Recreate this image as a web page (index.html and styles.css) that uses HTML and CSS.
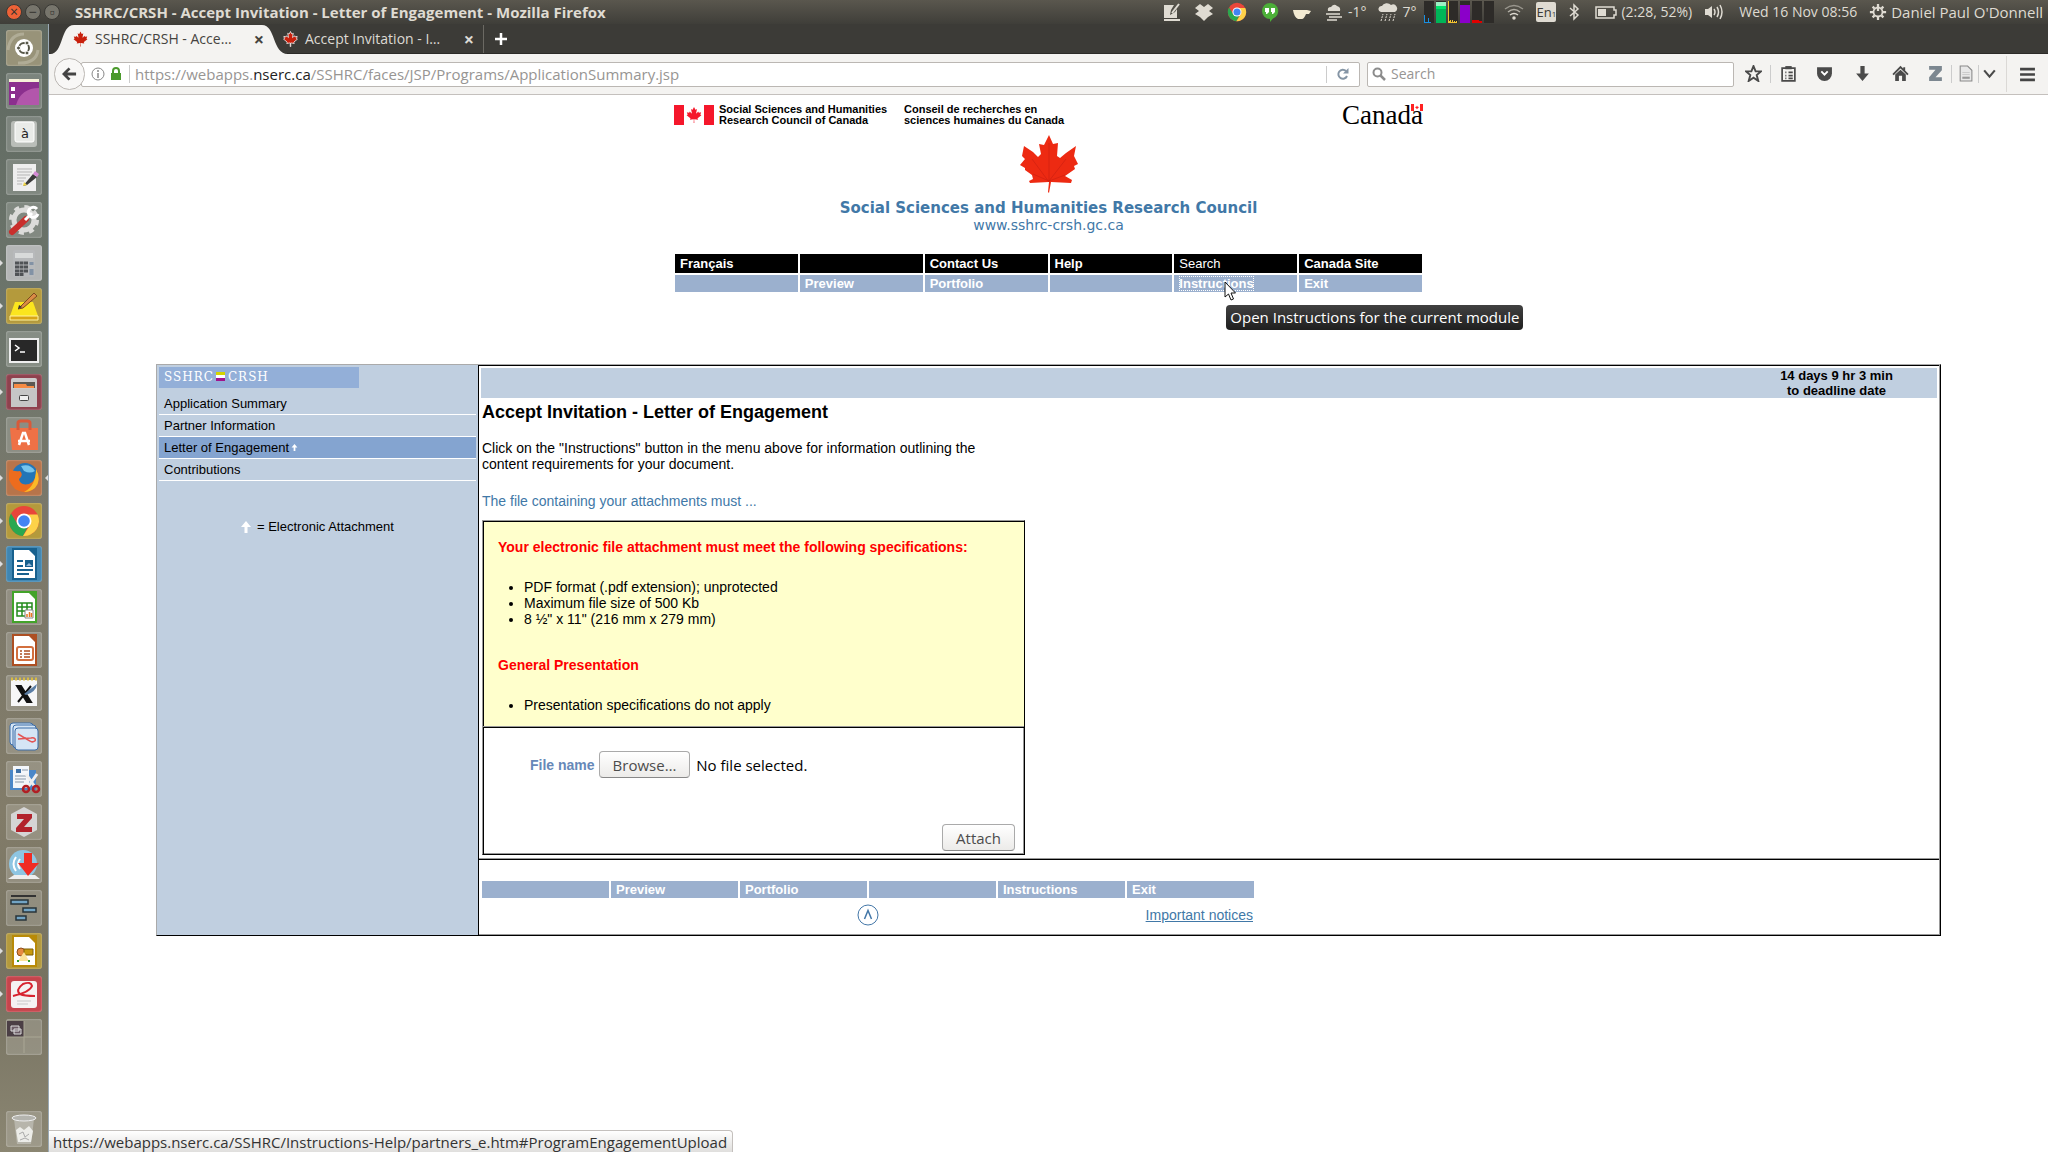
FILE: index.html
```html
<!DOCTYPE html>
<html lang="en">
<head>
<meta charset="utf-8">
<title>SSHRC/CRSH - Accept Invitation - Letter of Engagement</title>
<link rel="stylesheet" href="styles.css">
</head>
<body>
<svg class="defs" aria-hidden="true">
  <defs>
    <symbol id="flag-leaf" viewBox="-2015 -2000 4030 4030"><path d="m-90 2030 45-863a95 95 0 0 0-111-98l-859 151 116-320a65 65 0 0 0-20-73l-941-762 212-99a65 65 0 0 0 34-79l-186-572 542 115a65 65 0 0 0 73-38l105-247 423 454a65 65 0 0 0 111-57l-204-1052 327 189a65 65 0 0 0 91-27l332-652 332 652a65 65 0 0 0 91 27l327-189-204 1052a65 65 0 0 0 111 57l423-454 105 247a65 65 0 0 0 73 38l542-115-186 572a65 65 0 0 0 34 79l212 99-941 762a65 65 0 0 0-20 73l116 320-859-151a95 95 0 0 0-111 98l45 863z"/></symbol>
    <symbol id="up-arrow" viewBox="0 0 12 14"><path d="M6 1 11 7H7.500V13H4.500V7H1z" fill="#fff"/></symbol>
    <symbol id="chrome" viewBox="0 0 36 36"><circle cx="18" cy="18" r="15" fill="#e9463a"/><path d="M5 10.500A15 15 0 0 0 17 33l6-11.500A7 7 0 0 1 11.500 21z" fill="#2aa84f"/><path d="M17 33A15 15 0 0 0 31.500 11.500H18.500A7 7 0 0 1 24 22z" fill="#fdd249"/><circle cx="18" cy="18" r="7.500" fill="#fff"/><circle cx="18" cy="18" r="5.800" fill="#4284f3"/></symbol>
    <symbol id="doc" viewBox="0 0 36 36"><path d="M7 3H24L30 9V33H7z" fill="#fff" stroke="currentColor" stroke-width="2"/><path d="M21 2H31V12z" fill="currentColor"/></symbol>
  </defs>
</svg>

<header class="panel">
  <div class="window-controls">
    <button class="wc close" aria-label="Close">×</button>
    <button class="wc" aria-label="Minimize">−</button>
    <button class="wc max" aria-label="Maximize">▫</button>
  </div>
  <div class="window-title">SSHRC/CRSH - Accept Invitation - Letter of Engagement - Mozilla Firefox</div>
  <div class="indicators">
    <svg class="i20" viewBox="0 0 20 20"><path d="M2 3H12L9 8 8 13 13 10 15 7V16H2z" fill="#dfdbd2"/><path d="M17 2 10 11" stroke="#dfdbd2" stroke-width="2"/><path d="M2 18H18" stroke="#dfdbd2" stroke-width="2"/></svg>
    <svg class="i20" viewBox="0 0 20 20"><path d="M6 2 10 5 14 2 19 6 15 9 19 12 14 15 10 19 6 15 1 12 5 9 1 6z" fill="#dfdbd2"/></svg>
    <svg class="i22"><use href="#chrome"/></svg>
    <svg class="i20" viewBox="0 0 20 20"><path d="M10 1a8 8 0 0 1 3 15.500L10 20V17A8 8 0 0 1 10 1z" fill="#4caf38"/><path d="M5 6H9V10L7 12H6V10H5zM11 6H15V10L13 12H12V10H11z" fill="#fff"/></svg>
    <svg class="i20" viewBox="0 0 20 20"><path d="M1 8H15L19 9 17 12H14Q12 17 10 17H6Q2 15 1 8z" fill="#f3ead2"/></svg>
    <span class="ind-group"><svg class="i20" viewBox="0 0 20 20"><path d="M4 9q-1-4 3-4 3-4 6-1 4 1 3 5z" fill="#dfdbd2"/><path d="M2 12H16M5 15H18M3 18H13" stroke="#dfdbd2" stroke-width="1.500"/></svg>-1°</span>
    <span class="ind-group rain"><svg class="i20" viewBox="0 0 20 20"><path d="M3 10a3 3 0 0 1 1-6 5 4 0 0 1 9-1 4 4 0 0 1 4 7z" fill="#dfdbd2"/><path d="M3 19 5 12M7 19 9 12M11 19 13 12M15 19 17 12" stroke="#dfdbd2" stroke-dasharray="2 1"/></svg>7°</span>
    <svg class="monitor" viewBox="0 0 70 22"><path d="M0 0H10V22H0zM12 0H22V22H12zM24 0H34V22H24zM36 0H46V22H36zM48 0H58V22H48zM60 0H70V22H60z" fill="#2d2b28"/><path d="M0 14h1v7h3v-4h1v4h2v1H0z" fill="#1a8fe0"/><path d="M12 1H22V22H12z" fill="#00b558"/><path d="M12 1H22V5H12z" fill="#9cf0c4"/><path d="M12 5H22V8H12z" fill="#00e56d"/><path d="M24 0h1v20h1v-1h1v2h1v-2h1v2h1v-1h1v1h1v-1h1v2H24z" fill="#f2c230"/><path d="M36 4H46V22H36z" fill="#8b00c9"/><path d="M48 19h7v1h3v2H48z" fill="#e00000"/></svg>
    <svg class="i20 wifi" viewBox="0 0 20 20" fill="none" stroke="#dfdbd2" stroke-width="1.500"><path d="M1 7Q10 0 19 7" opacity=".5"/><path d="M4 10Q10 5 16 10" opacity=".7"/><path d="M6 13Q10 10 14 13"/><circle cx="10" cy="16" r="1" fill="#dfdbd2"/></svg>
    <span class="keyboard">En<small>1</small></span>
    <svg class="bt" viewBox="0 0 12 20"><path d="M2 6 10 13 6 17V3L10 7 2 14" fill="none" stroke="#dfdbd2" stroke-width="1.500"/></svg>
    <span class="ind-group"><svg class="i22" viewBox="0 0 22 20"><path d="M1 5H19V8H21V13H19V16H1z" fill="none" stroke="#dfdbd2" stroke-width="1.500"/><path d="M3 7H11V14H3z" fill="#dfdbd2"/></svg>(2:28, 52%)</span>
    <svg class="i20" viewBox="0 0 20 20"><path d="M1 7H4L8 4V16L4 13H1z" fill="#dfdbd2"/><path d="M10 7Q12 10 10 13M13 5Q16 10 13 15M16 3Q20 10 16 17" fill="none" stroke="#dfdbd2" stroke-width="1.500"/></svg>
    <span class="clock">Wed 16 Nov 08:56</span>
    <span class="ind-group user"><svg class="i18" viewBox="0 0 20 20"><circle cx="10" cy="10" r="5" fill="none" stroke="#dfdbd2" stroke-width="2"/><path d="M10 1V9M1 10H5M15 10H19M10 15V19M4 4 6 6M16 4 14 6M4 16 6 14M16 16 14 14" stroke="#dfdbd2" stroke-width="2.500"/></svg>Daniel Paul O'Donnell</span>
  </div>
</header>

<div class="desktop">
  <aside class="launcher" aria-label="Launcher">
    <button class="tile dash" aria-label="Dash"><svg viewBox="0 0 36 36"><path d="M2 20Q4 4 18 4M12 33Q30 34 32 20" fill="none" stroke="#c8c6b4" stroke-width="3" opacity=".5"/><circle cx="18" cy="18" r="9" fill="#fff"/><circle cx="18" cy="18" r="5" fill="none" stroke="#555547" stroke-width="2"/><g fill="#555547" stroke="#fff"><circle cx="12.500" cy="18" r="2"/><circle cx="21" cy="13" r="2"/><circle cx="21" cy="23" r="2"/></g></svg></button>
    <button class="tile" aria-label="Workspace"><svg viewBox="0 0 36 36"><path d="M3 8H33V32H3z" fill="#8b2f8e"/><path d="M10 32Q15 15 33 15V32z" fill="#b256ab"/><path d="M3 6H33V9H3z" fill="#f6f0da"/><path d="M5 14h4v4H5zM5 21h4v4H5z" fill="#fff"/></svg></button>
    <button class="tile" aria-label="Character map"><svg viewBox="0 0 36 36"><rect x="5" y="5" width="26" height="26" rx="3" fill="#b9bdb8"/><rect x="9" y="6" width="19" height="20" rx="2" fill="#e9ebe8" stroke="#fff"/><text x="15" y="22" class="key-letter">à</text></svg></button>
    <button class="tile" aria-label="Text editor"><svg viewBox="0 0 36 36"><path d="M7 5H30V32H7z" fill="#eee"/><path d="M11 10H26M11 13H26M11 16H24M11 19H20M11 22H18M11 25H16" stroke="#b5b5b5"/><path d="M17 27 27 15 31 18 21 26z" fill="#3a3a3a"/><path d="m27 15 2-3 4 3-2 3z" fill="#d58ad5"/><path d="m17 27 1-4 3 3z" fill="#f2d84a"/></svg></button>
    <button class="tile" aria-label="System settings"><svg viewBox="0 0 36 36"><circle cx="18" cy="18" r="10" fill="none" stroke="#dcdcda" stroke-width="5"/><circle cx="18" cy="18" r="13" fill="none" stroke="#dcdcda" stroke-width="4" stroke-dasharray="5 5.200"/><path d="M6 30 20 17" stroke="#c92f2c" stroke-width="6" stroke-linecap="round"/><path d="M19 18 26 11M31 7a5 5 0 1 0 1 5" fill="none" stroke="#fff" stroke-width="3"/></svg></button>
    <button class="tile grey running" aria-label="Calculator"><svg viewBox="0 0 36 36"><rect x="7" y="5" width="22" height="27" rx="2" fill="#b7b9bb"/><path d="M9 8H27V13H9z" fill="#d8dada"/><path d="M9 18H22M9 22H22M9 26H22M9 29.500H18" stroke="#505356" stroke-width="3" stroke-dasharray="4 .5"/><path d="M23.500 17h4v3h-4zM23.500 24h4v6h-4z" fill="#8292a5"/></svg></button>
    <button class="tile gold running" aria-label="Notes"><svg viewBox="0 0 36 36"><path d="M9 14H27L32 28H4z" fill="#fbe51e"/><path d="M4 28H32V32H4z" fill="#d9a514" stroke="#fff3a0"/><path d="M13 20 28 5l3 3-14 12-5 1z" fill="#d98b45" stroke="#7b4a20"/><path d="m12 21 1-4 3 2z" fill="#333"/></svg></button>
    <button class="tile" aria-label="Terminal"><svg viewBox="0 0 36 36"><rect x="4" y="8" width="28" height="23" fill="#282828" stroke="#eee" stroke-width="2"/><path d="m9 14 4 3-4 3M14 21h5" fill="none" stroke="#fff" stroke-width="1.500"/></svg></button>
    <button class="tile wine running" aria-label="Files"><svg viewBox="0 0 36 36"><rect x="5" y="4" width="26" height="29" rx="2" fill="#ccc"/><path d="M7 8H29V14H7z" fill="#5c5953"/><path d="M8 10H20L21 12H28V14H8z" fill="#f68b44"/><path d="M5 15H31V33H5z" fill="#c6c6c6"/><rect x="13.500" y="21.500" width="9" height="5" rx="1" fill="#eee" stroke="#444"/></svg></button>
    <button class="tile" aria-label="Software"><svg viewBox="0 0 36 36"><path d="M4 11H32V33H6z" fill="#ee7146"/><path d="M12 13V6Q12 4 15 4H21Q24 4 24 6V13" fill="none" stroke="#d85a3a" stroke-width="3"/><path d="m13 28 4-12h2l4 12M12 24H24" fill="none" stroke="#fff" stroke-width="2.500"/></svg></button>
    <button class="tile rust running active" aria-label="Firefox"><svg viewBox="0 0 36 36"><circle cx="19" cy="16" r="13" fill="#2375b7"/><path d="M15 6Q24 3 29 11Q24 14 18 11z" fill="#76c4ec"/><path d="M4 9Q8 12 14 11Q18 15 13 19Q14 26 23 24Q31 21 30 9Q36 20 29 28Q20 36 9 29Q0 20 4 9z" fill="#ed6c1e"/><path d="M30 9Q36 20 29 28Q24 32 18 32Q30 26 30 9z" fill="#fbb928"/></svg></button>
    <button class="tile gold running" aria-label="Chrome"><svg><use href="#chrome"/></svg></button>
    <button class="tile blue running" aria-label="Writer"><svg viewBox="0 0 36 36" color="#18618e"><use href="#doc"/><path d="M11 15H17M11 20H17M11 24H27M11 28H23" stroke="#18618e" stroke-width="2"/><path d="M19 14h8v7h-8z" fill="#18618e"/><path d="m20 20 3-3 3 3z" fill="#9bd"/></svg></button>
    <button class="tile" aria-label="Calc"><svg viewBox="0 0 36 36" color="#43a32a"><use href="#doc"/><path d="M11 14H26V27H11zM11 18H26M11 22H26M16 14V27M21 14V27" fill="none" stroke="#238b1c" stroke-width="1.500"/><path d="M19 21h8v8h-8z" fill="#fff" stroke="#888"/><path d="M21 28v-3M23.500 28v-5M25.500 28v-4" stroke="#e67624" stroke-width="1.500"/></svg></button>
    <button class="tile" aria-label="Impress"><svg viewBox="0 0 36 36" color="#ad4f22"><use href="#doc"/><rect x="11" y="15" width="16" height="13" rx="2" fill="#fff" stroke="#d36f3e" stroke-width="2"/><path d="M14 19H16M18 19H24M14 22H16M18 22H24M14 25H16M18 25H24" stroke="#ad4f22" stroke-width="1.500"/></svg></button>
    <button class="tile" aria-label="Xournal"><svg viewBox="0 0 36 36"><path d="M5 5H31V31H5z" fill="#f7f7f7"/><path d="M5 4H31" stroke="#d8bb43" stroke-width="3" stroke-dasharray="2 2"/><path d="M11 11H15L25 27H21zM25 11 12 27" fill="#111" stroke="#111" stroke-width="2"/><path d="M18 19 31 9Q30 17 20 20z" fill="#5b7ea5"/></svg></button>
    <button class="tile" aria-label="Screen capture"><svg viewBox="0 0 36 36" fill="#d5e5f5" stroke="#3b6ca8"><rect x="4" y="5" width="23" height="22" rx="3"/><rect x="7" y="7" width="23" height="23" rx="3"/><rect x="9" y="10" width="23" height="22" rx="3"/><path d="M12 16 24 23a3 2 0 1 0 1-3L12 21" fill="none" stroke="#e25555" stroke-width="1.500"/></svg></button>
    <button class="tile" aria-label="PDF cutter"><svg viewBox="0 0 36 36"><path d="M4 9H30V29H4z" fill="#4a87c8"/><path d="M7 5H23V27H7z" fill="#f3f6fa"/><path d="M10 8h5v4h-5z" fill="#3e71a8"/><path d="M16 9H22M9 15H20M9 18H20M9 21H18" stroke="#8797a8"/><path d="m20 13 9 13M31 13 22 26" stroke="#eee" stroke-width="3"/><g fill="none" stroke="#b11e24" stroke-width="2.500"><circle cx="20" cy="28" r="3"/><circle cx="30" cy="28" r="3"/></g></svg></button>
    <button class="tile" aria-label="Zotero"><svg viewBox="0 0 36 36"><path d="M18 3 31 10V26L18 33 5 26V10z" fill="#d5d5d5"/><path d="M11 10H26V14L18 23H26V28H10V24L18 15H11z" fill="#b2232c"/></svg></button>
    <button class="tile" aria-label="Downloader"><svg viewBox="0 0 36 36"><circle cx="17" cy="17" r="14" fill="#8ec5e2"/><path d="M10 10Q5 17 10 24M14 12Q10 17 14 22" fill="none" stroke="#fff" stroke-width="2"/><path d="M2 32 8 28H29L34 32z" fill="#eee"/><path d="M18 6H26V16H33L22 29 12 16H18z" fill="#f02c24"/></svg></button>
    <button class="tile" aria-label="Planner"><svg viewBox="0 0 36 36"><path d="M5 6H30" stroke="#333" stroke-width="2"/><g fill="#72a4c4" stroke="#29343a" stroke-width="1.500"><path d="M5 10H22V14H5zM17 18H30V22H17zM10 26H20V30H10z"/></g></svg></button>
    <button class="tile gold running" aria-label="Draw"><svg viewBox="0 0 36 36" color="#b88a08"><use href="#doc"/><circle cx="15" cy="19" r="4" fill="#e68a43" stroke="#8d4f1b"/><path d="M18 16h9v6h-9z" fill="#c79a0e" stroke="#7d5f06"/><path d="m12 28 6-9 5 9z" fill="#fbe39b"/><path d="M11 27h2v2h-2zM22 27h2v2h-2z" fill="#2f9c2f"/></svg></button>
    <button class="tile red running" aria-label="Document viewer"><svg viewBox="0 0 36 36"><rect x="5" y="5" width="26" height="27" rx="3" fill="#f5f2f2"/><path d="M7 20Q24 16 26 10Q25 5 17 8Q9 14 14 18Q18 20 29 20" fill="none" stroke="#d8232f" stroke-width="2"/><path d="M11 25H25M11 28H22" stroke="#c8c8c8"/></svg></button>
    <button class="tile" aria-label="Workspace switcher"><svg viewBox="0 0 36 36"><path d="M1 2H18V18H1z" fill="#4b3f45"/><path d="M18 2V34M1 18H35" stroke="#aaa795"/><path d="M5 7h8v5H5zM8 10h7v5H8z" fill="#6c5d66" stroke="#ddd"/></svg></button>
    <button class="tile trash" aria-label="Trash"><svg viewBox="0 0 36 36"><path d="M8 8 11 33H25L28 8z" fill="#c9c9c3" opacity=".6"/><ellipse cx="18" cy="7" rx="12" ry="3" fill="#b4b4ae" stroke="#eee"/><path d="m10 19 4-3 4 3 5-4 4 5-2 11H12z" fill="#ecece8"/><path d="m13 23 4-2 2 5 4-3M14 29l5-2 4 2" stroke="#aaa" fill="none"/></svg></button>
  </aside>

  <div class="browser">
    <div class="tabs">
      <div class="tab selected">
        <svg class="tab-shape" viewBox="0 0 240 28" preserveAspectRatio="none"><path d="M0 28C14 28 10 0 24 0H212C226 0 222 28 238 28z" fill="#f4f3f1"/></svg>
        <svg class="favicon"><use href="#flag-leaf"/></svg><span class="tab-title">SSHRC/CRSH - Acce…</span><button class="tab-close" aria-label="Close tab">×</button>
      </div>
      <div class="tab">
        <svg class="favicon outlined"><use href="#flag-leaf"/></svg><span class="tab-title">Accept Invitation - I…</span><button class="tab-close" aria-label="Close tab">×</button>
      </div>
      <button class="new-tab" aria-label="New tab"><svg viewBox="0 0 14 14"><path d="M7 1V13M1 7H13" stroke="#fff" stroke-width="2.500"/></svg></button>
    </div>
    <div class="toolbar">
      <button class="back" aria-label="Back"><svg viewBox="0 0 16 16"><path d="M8 2 2 8 8 14M2 8H15" fill="none" stroke="#444" stroke-width="3"/></svg></button>
      <div class="address">
        <svg class="i14" viewBox="0 0 14 14"><circle cx="7" cy="7" r="6" fill="none" stroke="#888"/><path d="M7 6V11M7 3V5" stroke="#888" stroke-width="1.500"/></svg>
        <svg class="i14" viewBox="0 0 14 14"><path d="M2 6H12V13H2z" fill="#4b9a2c"/><path d="M4 7V4a3 3 0 0 1 6 0V7" fill="none" stroke="#4b9a2c" stroke-width="2"/></svg>
        <span class="url">https://webapps.<b>nserc.ca</b>/SSHRC/faces/JSP/Programs/ApplicationSummary.jsp</span>
        <button class="reload" aria-label="Reload"><svg viewBox="0 0 14 14"><path d="M11 9A4.500 4.500 0 1 1 10 4" fill="none" stroke="#8595a5" stroke-width="2"/><path d="M12.500 1V6.500H7z" fill="#8595a5"/></svg></button>
      </div>
      <div class="search"><svg class="i14" viewBox="0 0 14 14"><circle cx="5.500" cy="5.500" r="4" fill="none" stroke="#8c8c8c" stroke-width="2"/><path d="M8.500 8.500 13 13" stroke="#8c8c8c" stroke-width="2.500"/></svg><input type="search" placeholder="Search" aria-label="Search"></div>
      <div class="tools">
        <button class="star" aria-label="Bookmark"><svg viewBox="0 0 16 16"><path d="m8 1 2 5h5l-4 3.500L12.500 15 8 12l-4.500 3L5 9.500 1 6h5z" fill="none" stroke="#4a4a4a" stroke-width="1.800"/></svg></button>
        <button aria-label="Bookmarks list" class="list ruled"><svg viewBox="0 0 16 16"><path d="M2 3H14V15H2zM5 7H6M8 7H12M5 10H6M8 10H12M5 12.500H6M8 12.500H12" fill="none" stroke="#4a4a4a" stroke-width="1.600"/><path d="M5 1H11V4H5z" fill="#4a4a4a"/></svg></button>
        <button aria-label="Pocket"><svg viewBox="0 0 16 16"><path d="M1 2H15V8a7 7 0 0 1-14 0z" fill="#4a4a4a"/><path d="m5 6 3 3 3-3" fill="none" stroke="#fff" stroke-width="1.800"/></svg></button>
        <button aria-label="Downloads"><svg viewBox="0 0 16 16"><path d="M6 1H10V8H14L8 15 2 8H6z" fill="#4a4a4a"/></svg></button>
        <button aria-label="Home"><svg viewBox="0 0 16 16"><path d="M1 9 8 2 15 9M11.500 2V5" fill="none" stroke="#4a4a4a" stroke-width="1.800"/><path d="M3 9 8 4.500 13 9V15H9.500V10H6.500V15H3z" fill="#4a4a4a"/></svg></button>
        <button class="zotero" aria-label="Zotero"><svg viewBox="0 0 16 16"><path d="M2 1H14V5L8 11.500H14V15H2V11.500L8 4.500H2z" fill="#7c8790"/></svg></button>
        <button aria-label="Save page" class="save ruled"><svg viewBox="0 0 16 16"><path d="M3 1H10L14 5V15H3z" fill="#e8e8e8" stroke="#8a8a8a"/><path d="M5 7H12M5 9H12" stroke="#ccc"/><path d="M5 11H12V13H5z" fill="#999"/></svg></button>
        <button aria-label="More" class="more ruled"><svg viewBox="0 0 16 16"><path d="m3 5 5 6 5-6" fill="none" stroke="#4a4a4a" stroke-width="2"/></svg></button>
        <button aria-label="Menu" class="menu"><svg viewBox="0 0 16 16"><path d="M1 3H15M1 8H15M1 13H15" stroke="#444" stroke-width="2.500"/></svg></button>
      </div>
    </div>

    <main class="page">
      <div class="masthead">
        <div class="signature">
          <svg class="flag" viewBox="0 0 40 20"><path d="M0 0H10V20H0zM30 0H40V20H30z" fill="#f5172b"/><use href="#flag-leaf" x="12" y="2" width="16" height="16" fill="#f5172b"/></svg>
          <span class="sig-en">Social Sciences and Humanities<br>Research Council of Canada</span>
          <span class="sig-fr">Conseil de recherches en<br>sciences humaines du Canada</span>
          <span class="wordmark">Canada<svg viewBox="0 0 12 7"><path d="M0 0H3V7H0zM9 0H12V7H9z" fill="#f22"/><use href="#flag-leaf" x="4" y="1" width="4" height="5" fill="#f22"/></svg></span>
        </div>
        <svg class="maple" viewBox="0 0 58 58"><path d="M29 0 33 9 38 8 37 21 40 23 46 18 56 11 54 21 58 29 54 31 55 34 45 41 52 45 51 48 31 47 29 58 28 57 29 47 10 48 9 46 13 44 12 40 5 35 5 33 0 30 5 24 2 21 4 11 13 17 18 22 21 19 19 9 24 10z" fill="#ed2a12"/><path d="M29 8V47L12 24M29 46 46 24M29 46 13 39M29 46 45 40" fill="none" stroke="#c91f10" stroke-width=".6"/></svg>
        <h1>Social Sciences and Humanities Research Council</h1>
        <div class="site">www.sshrc-crsh.gc.ca</div>
        <nav class="top-nav" aria-label="Site">
          <a href="#" class="dark">Français</a><span class="dark"></span><a href="#" class="dark">Contact Us</a><a href="#" class="dark">Help</a><a href="#" class="dark plain">Search</a><a href="#" class="dark">Canada Site</a>
          <span></span><a href="#">Preview</a><a href="#">Portfolio</a><span></span>
          <div class="hovered"><a href="#" class="focused">Instructions</a>
            <svg class="cursor" viewBox="0 0 12 20"><path d="M1 1V16L4.500 13 7 19 9.500 18 7 12H11.500z" fill="#fff" stroke="#111"/></svg>
            <div class="tooltip" role="tooltip">Open Instructions for the current module</div>
          </div>
          <a href="#">Exit</a>
        </nav>
      </div>

      <div class="frame">
        <aside class="side">
          <div class="side-logo">SSHRC<i></i>CRSH</div>
          <ul>
            <li><a href="#">Application Summary</a></li>
            <li><a href="#">Partner Information</a></li>
            <li class="current"><a href="#">Letter of Engagement</a><svg><use href="#up-arrow"/></svg></li>
            <li><a href="#">Contributions</a></li>
          </ul>
          <div class="legend"><svg><use href="#up-arrow"/></svg>= Electronic Attachment</div>
        </aside>
        <section class="content">
          <div class="deadline"><span>14 days 9 hr 3 min<br>to deadline date</span></div>
          <div class="body">
            <h2>Accept Invitation - Letter of Engagement</h2>
            <p>Click on the "Instructions" button in the menu above for information outlining the content requirements for your document.</p>
            <p class="lead">The file containing your attachments must ...</p>
            <div class="attachment">
              <div class="specs">
                <h3>Your electronic file attachment must meet the following specifications:</h3>
                <ul><li>PDF format (.pdf extension); unprotected</li><li>Maximum file size of 500 Kb</li><li>8 ½" x 11" (216 mm x 279 mm)</li></ul>
                <h3 class="second">General Presentation</h3>
                <ul><li>Presentation specifications do not apply</li></ul>
              </div>
              <form class="upload">
                <div class="file-row"><label for="file">File name</label><span class="picker"><input type="file" id="file"><button type="button" tabindex="-1">Browse…</button></span><output>No file selected.</output></div>
                <button type="button" class="attach">Attach</button>
              </form>
            </div>
          </div>
          <footer class="foot">
            <nav class="bottom-nav" aria-label="Module">
              <span></span><a href="#">Preview</a><a href="#">Portfolio</a><span></span><a href="#">Instructions</a><a href="#">Exit</a>
            </nav>
            <div class="foot-row"><a href="#" class="to-top" aria-label="Top of page"><svg viewBox="0 0 22 22"><circle cx="11" cy="11" r="10" fill="none" stroke="#4377a8"/><path d="M7.500 15 11 6.500 14.500 15" fill="none" stroke="#4377a8" stroke-width="1.500"/></svg></a><a href="#" class="notices">Important notices</a></div>
          </footer>
        </section>
      </div>
    </main>
    <div class="status">https://webapps.nserc.ca/SSHRC/Instructions-Help/partners_e.htm#ProgramEngagementUpload</div>
  </div>
</div>
</body>
</html>
```
FILE: styles.css
```css
* { box-sizing: border-box; }
body { margin: 0; min-height: 100vh; display: flex; flex-direction: column; background: #fff; font: 14px/16px "Liberation Sans", Arial, sans-serif; color: #000; }
button { border: 0; padding: 0; background: none; font: inherit; color: inherit; }
a { color: inherit; text-decoration: none; }
ul, p, h1, h2, h3 { margin: 0; padding: 0; }
svg { display: block; flex: none; }
.defs { position: absolute; width: 0; height: 0; }

/* Desktop panel */
.panel { height: 24px; display: flex; align-items: center; background: linear-gradient(#5a574e, #3f3e39); color: #dfdbd2; font: 15px/24px "Open Sans", sans-serif; }
.window-controls { display: flex; gap: 3px; width: 75px; padding-left: 6px; }
.wc { width: 16px; height: 16px; border-radius: 8px; border: 1px solid #3a3935; background: #77756c; color: #33322e; font-size: 14px; line-height: 12px; }
.wc.close { background: #ee6237; }
.window-title { font-weight: 700; flex: 1; white-space: nowrap; }
.indicators { display: flex; align-items: center; gap: 12px; padding-right: 5px; font-size: 14px; white-space: nowrap; }
.ind-group { display: flex; align-items: center; gap: 4px; }
.user { font-size: 15px; }
.clock { margin-left: 3px; }
.i14 { width: 14px; height: 14px; }
.i18 { width: 18px; height: 18px; }
.i20 { width: 20px; height: 20px; }
.i22 { width: 22px; height: 22px; }
.monitor { width: 70px; height: 22px; margin: 0 -2px 0 -4px; }
.bt { width: 12px; height: 20px; margin-right: 3px; }
.keyboard { width: 20px; height: 20px; border-radius: 2px; background: #dfdbd2; color: #3c3b37; font-size: 13px; line-height: 20px; text-align: center; }
.keyboard small { font-size: 8px; }

.desktop { flex: 1; display: flex; }

/* Launcher */
.launcher { width: 49px; padding: 6px 6px 5px; display: flex; flex-direction: column; gap: 7px; background: linear-gradient(#5f6961, #6f776d 30%, #7b786a 45%, #827c69 70%, #767261 85%, #8b8672); border-right: 1px solid #9aa9b5; }
.tile { position: relative; width: 36px; height: 36px; border-radius: 3px; background: #ffffff2b; box-shadow: inset 0 0 2px #ffffff88; }
.tile svg { width: 36px; height: 36px; }
.tile.dash { background: #989379; }
.tile.grey { background: #b4b6b6; }
.tile.gold { background: #b49a3c; }
.tile.wine { background: #8f414e; }
.tile.rust { background: #b7744a; }
.tile.blue { background: #3f86b2; }
.tile.red { background: #c6444c; }
.tile.running::before { content: ""; position: absolute; left: -6px; top: 15px; border: 3px solid transparent; border-left-color: #ddd; border-right: 0; }
.tile.active::after { content: ""; position: absolute; right: -6px; top: 15px; border: 3px solid transparent; border-right-color: #ddd; border-left: 0; }
.trash { margin-top: auto; }
.key-letter { font: 13px "DejaVu Sans", sans-serif; fill: #222; }

/* Browser */
.browser { flex: 1; position: relative; display: flex; flex-direction: column; min-width: 0; }
.tabs { height: 30px; display: flex; align-items: flex-end; background: #3c3b37; border-bottom: 1px solid #2c2b28; padding-left: 1px; color: #dddad4; font: 15px/28px "Open Sans", sans-serif; }
.tab { position: relative; display: flex; align-items: center; gap: 7px; width: 208px; height: 28px; padding-left: 8px; }
.tab.selected { width: 225px; padding-left: 23px; color: #45433f; }
.tab-shape { position: absolute; left: 0; top: 0; width: 240px; height: 29px; }
.favicon { position: relative; width: 15px; height: 16px; fill: #c8200c; }
.favicon.outlined { stroke: #fff; stroke-width: 200px; }
.tab-title { position: relative; width: 148px; font-size: 14px; white-space: nowrap; }
.tab-close { position: relative; width: 18px; font-size: 18px; font-weight: 700; }
.new-tab { width: 36px; height: 28px; padding-left: 10px; border-left: 1px solid #6b6963; }
.new-tab svg { width: 14px; height: 14px; }

.toolbar { height: 41px; display: flex; align-items: center; background: #f4f3f1; border-bottom: 1px solid #c4c0bd; padding-left: 5px; font: 15px/22px "Open Sans", sans-serif; }
.back { position: relative; z-index: 1; width: 31px; height: 32px; border: 1px solid #bbb7b3; border-radius: 16px; background: #f8f7f6; padding-left: 7px; }
.back svg { width: 15px; height: 16px; }
.address { flex: 1; display: flex; align-items: center; gap: 4px; height: 25px; margin: 0 7px 0 -4px; padding-left: 9px; background: #fff; border: 1px solid #bbb7b3; border-radius: 2px; color: #979593; }
.url { flex: 1; margin-left: 2px; padding-left: 5px; border-left: 1px solid #ccc; line-height: 18px; white-space: nowrap; }
.url b { font-weight: 400; color: #222; }
.reload { width: 33px; height: 17px; padding-left: 9px; border-left: 1px solid #ccc; }
.reload svg { width: 14px; height: 14px; }
.search { width: 367px; height: 25px; display: flex; align-items: center; gap: 5px; padding-left: 4px; background: #fff; border: 1px solid #bbb7b3; border-radius: 2px; }
.search input { flex: 1; min-width: 0; border: 0; padding: 0; background: none; font: 14px/22px "Open Sans", sans-serif; }
.search input::placeholder { color: #979593; }
.tools { display: flex; align-items: center; margin-left: 3px; }
.tools button { width: 38px; height: 18px; display: flex; justify-content: center; }
.tools svg { width: 17px; height: 17px; }
.tools .star { width: 33px; }
.tools .ruled { border-left: 1px solid #ccc; }
.tools .list { width: 35px; }
.tools .zotero { width: 32px; }
.tools .save { width: 27px; }
.tools .more { width: 22px; margin-right: 6px; }
.tools .menu { width: 42px; height: 36px; align-items: center; border-left: 1px solid #dbd9d6; }

/* Page */
.page { flex: 1; padding: 10px 107px 40px; }
.masthead { max-width: 749px; margin: 0 auto; display: flex; flex-direction: column; align-items: center; }
.signature { width: 100%; height: 20px; display: flex; align-items: center; font: bold 11px/11px "Liberation Sans", Arial, sans-serif; white-space: nowrap; }
.flag { width: 40px; height: 20px; margin-right: 5px; }
.sig-en { width: 185px; }
.wordmark { position: relative; margin-left: auto; font: 27px/24px "Liberation Serif", serif; }
.wordmark svg { position: absolute; right: 0; top: 1px; width: 12px; height: 7px; }
.maple { width: 58px; height: 58px; margin-top: 10px; }
h1 { margin-top: 5px; font: bold 15px/20px "DejaVu Sans", sans-serif; color: #4178a7; white-space: nowrap; }
.site { font: 14px/14px "DejaVu Sans", sans-serif; color: #4178a7; }
.top-nav { width: 747px; margin-top: 22px; display: grid; grid-template-columns: repeat(6, 1fr); gap: 2px; color: #fff; font-weight: 700; font-size: 13px; line-height: 17px; }
.top-nav > *, .bottom-nav > * { background: #9bb0ce; padding-left: 5px; }
.top-nav > .dark { background: #000; line-height: 19px; min-height: 19px; }
.top-nav > .plain { font-weight: 400; }
.hovered { position: relative; }
.focused { outline: 1px dotted #fff; outline-offset: -1px; }
.cursor { position: absolute; z-index: 2; left: 50px; top: 6px; width: 12px; height: 20px; }
.tooltip { position: absolute; left: 52px; top: 30px; height: 25px; padding: 0 4px; border-radius: 4px; background: linear-gradient(#414141, #1f1f1f); font: 15px/25px "Open Sans", sans-serif; white-space: nowrap; }

.frame { margin-top: 72px; display: flex; border: 1px solid #aaa; border-right-color: #000; border-bottom-color: #000; box-shadow: inset -1px -1px #999; }
.side { width: 321px; padding: 2px; background: #c0cfe0; font-size: 13px; }
.side-logo { width: 200px; height: 21px; margin-bottom: 5px; padding-left: 5px; background: #93afd8; color: #fff; font: 12px/21px "DejaVu Serif", serif; letter-spacing: 1px; }
.side-logo i { display: inline-block; width: 9px; height: 9px; margin: 0 3px 0 2px; background: linear-gradient(#d4d400 33%, #fff 33% 66%, #a0148c 66%); }
.side ul { list-style: none; }
.side li { height: 22px; padding-left: 5px; display: flex; align-items: center; gap: 2px; border-bottom: 1px solid #fff; }
.side li svg { width: 7px; height: 9px; }
.side li.current { background: #84a4d0; }
.legend { display: flex; align-items: center; gap: 5px; margin: 38px 0 0 81px; }
.legend svg { width: 12px; height: 14px; }

.content { flex: 1; min-width: 0; margin-right: 1px; border-left: 1px solid #000; border-top: 1px solid #000; }
.deadline { margin: 2px 2px 0; height: 30px; display: flex; justify-content: flex-end; background: #c0cfe0; font-weight: 700; font-size: 13px; line-height: 15px; text-align: center; }
.deadline span { width: 201px; }
.body { padding: 4px 3px 4px; }
h2 { font-size: 18px; line-height: 20px; margin-bottom: 18px; }
.body p { max-width: 520px; }
.body .lead { margin: 21px 0 11px; color: #4178a7; }
.attachment { max-width: 543px; border: 1px solid #999; border-right-color: #000; border-bottom-color: #000; }
.specs { background: #ffffcc; border: solid #000; border-width: 1px 0 0 1px; padding: 17px 14px 14px; }
.specs h3 { color: #f00; font-size: 14px; line-height: 16px; }
.specs h3.second { margin-top: 30px; }
.specs ul { margin-top: 24px; padding-left: 26px; }
.upload { height: 127px; padding: 23px 9px 3px; display: flex; flex-direction: column; justify-content: space-between; border: solid #000; border-width: 1px 0 0 1px; box-shadow: 0 -1px #999, inset -1px -1px #999; }
.file-row { display: flex; align-items: center; padding-left: 37px; }
.file-row label { color: #6688b8; font-weight: 700; margin-right: 4px; }
.picker { position: relative; }
.picker input { position: absolute; inset: 0; width: 100%; opacity: 0; }
.picker button, .attach { height: 27px; padding: 0 13px; border: 1px solid #aaa; border-bottom-color: #888; border-radius: 4px; background: linear-gradient(#fff, #ecebe9); color: #4c4c4c; font: 15px/24px "Open Sans", sans-serif; }
.file-row output { margin-left: 6px; font: 15px/24px "Open Sans", sans-serif; }
.attach { align-self: flex-end; }
.foot { border-top: 1px solid #000; box-shadow: 0 -1px #999; padding: 21px 3px 9px; }
.bottom-nav { max-width: 772px; display: grid; grid-template-columns: repeat(6, 1fr); gap: 2px; color: #fff; font-weight: 700; font-size: 13px; line-height: 17px; }
.foot-row { max-width: 772px; margin-top: 6px; display: grid; grid-template-columns: 1fr 22px 1fr; align-items: center; }
.to-top { grid-column: 2; }
.to-top svg { width: 22px; height: 22px; }
.notices { justify-self: end; color: #4178a7; text-decoration: underline; margin-right: 1px; }

.status { position: absolute; left: 0; bottom: 0; height: 22px; padding: 0 5px 0 4px; border: 1px solid #c4c0bd; border-width: 1px 1px 0 0; border-top-right-radius: 4px; background: linear-gradient(#fff, #e0dfdd); color: #333; font: 15px/22px "Open Sans", sans-serif; white-space: nowrap; }
```
